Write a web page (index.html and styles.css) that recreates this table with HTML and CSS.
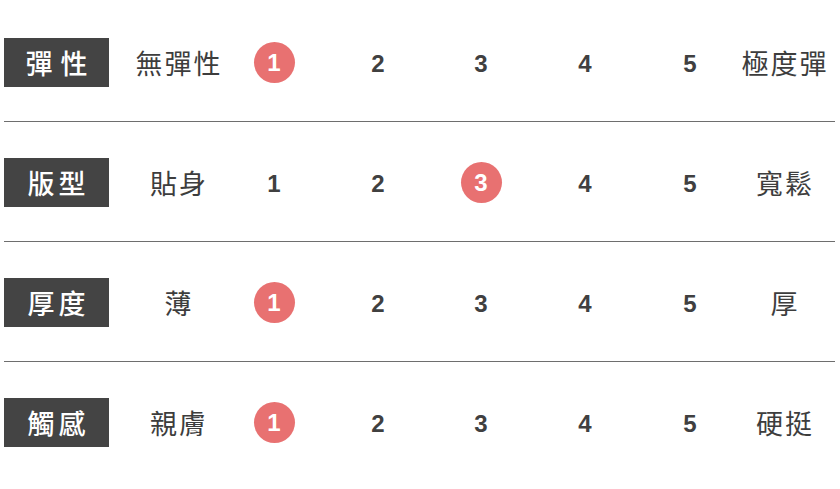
FILE: index.html
```html
<!DOCTYPE html>
<html lang="zh-Hant">
<head>
<meta charset="utf-8">
<link rel="stylesheet" href="styles.css">
</head>
<body>
<div class="chart">
  <div class="row">
    <div class="label">彈 性</div>
    <div class="low">無彈性</div>
    <div class="num"><span class="dot">1</span></div>
    <div class="num">2</div>
    <div class="num">3</div>
    <div class="num">4</div>
    <div class="num">5</div>
    <div class="high">極度彈</div>
  </div>
  <div class="sep"></div>
  <div class="row">
    <div class="label">版型</div>
    <div class="low">貼身</div>
    <div class="num">1</div>
    <div class="num">2</div>
    <div class="num"><span class="dot">3</span></div>
    <div class="num">4</div>
    <div class="num">5</div>
    <div class="high">寬鬆</div>
  </div>
  <div class="sep"></div>
  <div class="row">
    <div class="label">厚度</div>
    <div class="low">薄</div>
    <div class="num"><span class="dot">1</span></div>
    <div class="num">2</div>
    <div class="num">3</div>
    <div class="num">4</div>
    <div class="num">5</div>
    <div class="high">厚</div>
  </div>
  <div class="sep"></div>
  <div class="row">
    <div class="label">觸感</div>
    <div class="low">親膚</div>
    <div class="num"><span class="dot">1</span></div>
    <div class="num">2</div>
    <div class="num">3</div>
    <div class="num">4</div>
    <div class="num">5</div>
    <div class="high">硬挺</div>
  </div>
</div>
</body>
</html>
```

FILE: styles.css
```css
html, body {
  margin: 0;
  padding: 0;
  background: #ffffff;
}

body {
  padding: 38px 5px 0 4px;
  font-family: "Noto Sans CJK TC", "Noto Sans", sans-serif;
  color: #3d3d3d;
}

.chart {
  width: 831px;
}

.row {
  display: grid;
  grid-template-columns: 105px 117px 96px 112px 94px 114px 96px 92px;
  align-items: center;
  height: 49px;
}

.sep {
  width: 831px;
  height: 1px;
  background: #6e6e6e;
  margin: 34px 0 36px 0;
}

.label {
  background: #444444;
  color: #ffffff;
  height: 49px;
  display: flex;
  align-items: center;
  justify-content: center;
  font-size: 27px;
  letter-spacing: 4px;
  word-spacing: -6px;
  padding-left: 4px;
  box-sizing: border-box;
  font-weight: 500;
}

.low, .high {
  font-size: 27px;
  text-align: center;
  letter-spacing: 2px;
  line-height: 49px;
  white-space: nowrap;
}

.low {
  padding-left: 23px;
}

.high {
  padding-left: 2px;
}

.num {
  display: flex;
  justify-content: center;
  align-items: center;
  font-family: "Liberation Sans", Arial, sans-serif;
  font-weight: bold;
  font-size: 24px;
  color: #404040;
  height: 49px;
  padding-top: 2px;
  box-sizing: border-box;
}

.dot {
  width: 41px;
  height: 41px;
  border-radius: 50%;
  background: #e87171;
  color: #ffffff;
  display: flex;
  align-items: center;
  justify-content: center;
  margin-top: -2px;
}
```
